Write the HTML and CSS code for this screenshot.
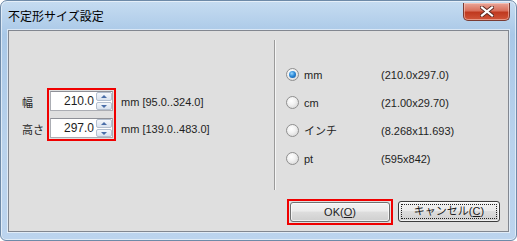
FILE: index.html
```html
<!DOCTYPE html>
<html lang="ja">
<head>
    <meta charset="UTF-8">
    <title>不定形サイズ設定</title>
    <link rel="stylesheet" href="styles.css">
</head>
<body>
    <div class="window">
        <div class="titlebar">
            <span class="title">不定形サイズ設定</span>
            <span class="close-btn">
                <svg width="14" height="11" viewBox="0 0 14 11">
                    <path d="M2 1.5 L12 9.5 M12 1.5 L2 9.5" stroke="#5a2a22" stroke-width="4" stroke-linecap="square"/>
                    <path d="M2 1.5 L12 9.5 M12 1.5 L2 9.5" stroke="#ffffff" stroke-width="2.2" stroke-linecap="square"/>
                </svg>
            </span>
        </div>

        <div class="client">
            <div class="main">
                <div class="size-panel">
                    <div class="labels">
                        <div class="field-label">幅</div>
                        <div class="field-label">高さ</div>
                    </div>
                    <div class="mark">
                        <div class="spin">
                            <span class="spin-value">210.0</span>
                            <span class="spin-arrows">
                                <span class="arrow up"></span>
                                <span class="arrow down"></span>
                            </span>
                        </div>
                        <div class="spin">
                            <span class="spin-value">297.0</span>
                            <span class="spin-arrows">
                                <span class="arrow up"></span>
                                <span class="arrow down"></span>
                            </span>
                        </div>
                    </div>
                    <div class="ranges">
                        <div class="range">mm [95.0..324.0]</div>
                        <div class="range">mm [139.0..483.0]</div>
                    </div>
                </div>

                <div class="separator"></div>

                <div class="unit-panel">
                    <div class="unit-row">
                        <span class="radio checked"></span>
                        <span class="unit-name">mm</span>
                        <span class="unit-value">(210.0x297.0)</span>
                    </div>
                    <div class="unit-row">
                        <span class="radio"></span>
                        <span class="unit-name">cm</span>
                        <span class="unit-value">(21.00x29.70)</span>
                    </div>
                    <div class="unit-row">
                        <span class="radio"></span>
                        <span class="unit-name">インチ</span>
                        <span class="unit-value">(8.268x11.693)</span>
                    </div>
                    <div class="unit-row">
                        <span class="radio"></span>
                        <span class="unit-name">pt</span>
                        <span class="unit-value">(595x842)</span>
                    </div>
                </div>
            </div>

            <div class="buttons">
                <div class="mark">
                    <button class="btn">OK(<u>O</u>)</button>
                </div>
                <button class="btn focused"><span class="focus-rect">キャンセル(<u>C</u>)</span></button>
            </div>
        </div>
    </div>
</body>
</html>
```

FILE: styles.css
```css
body {
    margin: 0;
    font-family: 'Liberation Sans', 'Noto Sans CJK JP', sans-serif;
    font-size: 11px;
    color: #1e1e1e;
    background: #ffffff;
}

.window {
    box-sizing: border-box;
    width: 517px;
    height: 241px;
    display: flex;
    flex-direction: column;
    padding: 0 7px 8px 7px;
    border: 1px solid #6e8aa8;
    border-radius: 7px 7px 6px 6px;
    background: linear-gradient(180deg, #c6dcf1 0%, #a9c8e7 14%, #b9d2ec 60%, #bcd4ee 100%);
    box-shadow: inset 0 0 0 1px rgba(255,255,255,0.55);
}

.titlebar {
    height: 29px;
    display: flex;
    align-items: center;
}

.title {
    font-family: 'Noto Sans CJK JP', sans-serif;
    font-size: 12px;
    line-height: 14px;
    color: #000;
    margin-top: 1px;
}

.close-btn {
    margin-left: auto;
    margin-right: -1px;
    align-self: flex-start;
    margin-top: 2px;
    width: 47px;
    height: 18px;
    box-sizing: border-box;
    border: 1px solid #7a3b33;
    border-top: none;
    border-radius: 0 0 5px 5px;
    background: linear-gradient(180deg, #e9a699 0%, #d9705c 45%, #c0391f 55%, #d0553a 100%);
    box-shadow: inset 0 0 0 1px rgba(255,220,210,0.5);
    display: flex;
    align-items: center;
    justify-content: center;
}

.client {
    box-sizing: border-box;
    height: 204px;
    border: 1px solid #828790;
    background: #dfdfdf;
    box-shadow: 0 0 0 1px rgba(255,255,255,0.55);
    display: flex;
    flex-direction: column;
}

.main {
    height: 150px;
    margin-top: 9px;
    display: flex;
}

.size-panel {
    width: 265px;
    box-sizing: border-box;
    padding-left: 13px;
    display: flex;
    align-items: center;
}

.labels {
    width: 25px;
    display: flex;
    flex-direction: column;
    gap: 7px;
    padding-top: 1px;
}

.field-label,
.range {
    height: 20px;
    line-height: 20px;
    font-family: 'Noto Sans CJK JP', sans-serif;
    font-size: 11px;
}

.range {
    font-family: 'Liberation Sans', 'Noto Sans CJK JP', sans-serif;
}

.ranges {
    display: flex;
    flex-direction: column;
    gap: 7px;
    margin-left: 5px;
    padding-top: 1px;
}

.mark {
    border: 2px solid #f00000;
    padding: 1px;
    display: flex;
    flex-direction: column;
    gap: 7px;
}

.spin {
    width: 63px;
    height: 20px;
    box-sizing: border-box;
    border: 1px solid #abadb3;
    border-top-color: #8e9097;
    background: #ffffff;
    display: flex;
}

.spin-value {
    flex: 1;
    text-align: right;
    padding-right: 1px;
    line-height: 18px;
    font-size: 12px;
}

.spin-arrows {
    width: 16px;
    display: flex;
    flex-direction: column;
    gap: 1px;
    padding: 0 0 0 1px;
}

.arrow {
    flex: 1;
    box-sizing: border-box;
    border: 1px solid #b3bfcf;
    border-radius: 2px;
    background: linear-gradient(180deg, #f4f7fb, #d9e2ee);
    display: flex;
    align-items: center;
    justify-content: center;
}

.arrow::before {
    content: '';
    width: 0;
    height: 0;
    border-left: 3px solid transparent;
    border-right: 3px solid transparent;
}

.arrow.up::before {
    border-bottom: 3px solid #4a6ea8;
}

.arrow.down::before {
    border-top: 3px solid #4a6ea8;
}

.separator {
    width: 1px;
    background: #9a9a9a;
    box-shadow: 1px 0 0 #f4f4f4;
}

.unit-panel {
    flex: 1;
    padding-left: 11px;
    padding-top: 4px;
    display: flex;
    flex-direction: column;
    justify-content: center;
    gap: 14px;
}

.unit-row {
    height: 14px;
    display: flex;
    align-items: center;
}

.radio {
    width: 13px;
    height: 13px;
    box-sizing: border-box;
    border-radius: 50%;
    border: 1px solid #8f8f8f;
    background: radial-gradient(circle at 40% 35%, #ffffff 0%, #f2f2f2 40%, #cfcfcf 100%);
    display: flex;
    align-items: center;
    justify-content: center;
}

.radio.checked::before {
    content: '';
    width: 7px;
    height: 7px;
    border-radius: 50%;
    background: radial-gradient(circle at 40% 35%, #9ad7ff 0%, #2d8bd8 45%, #0d4f9c 100%);
}

.unit-name {
    width: 77px;
    margin-left: 5px;
    font-size: 11px;
    line-height: 14px;
}

.unit-value {
    font-size: 11px;
    line-height: 14px;
}

.buttons {
    margin-top: 9px;
    padding-right: 8px;
    display: flex;
    justify-content: flex-end;
    align-items: center;
    gap: 5px;
}

.buttons .mark {
    gap: 0;
}

.btn {
    width: 100px;
    height: 20px;
    box-sizing: border-box;
    border: 1px solid #707070;
    border-radius: 3px;
    background: linear-gradient(180deg, #f2f2f2 0%, #ebebeb 45%, #dddddd 50%, #cfcfcf 100%);
    box-shadow: inset 0 0 0 1px rgba(255,255,255,0.7);
    font-family: 'Liberation Sans', 'Noto Sans CJK JP', sans-serif;
    font-size: 11px;
    color: #1e1e1e;
    padding: 0;
    display: flex;
    align-items: center;
    justify-content: center;
}

.btn.focused {
    width: 102px;
    height: 21px;
    border-color: #3c3c3c;
    padding: 2px;
}

.focus-rect {
    flex: 1;
    align-self: stretch;
    border: 1px dotted #222;
    display: flex;
    align-items: center;
    justify-content: center;
    line-height: 13px;
}
```
